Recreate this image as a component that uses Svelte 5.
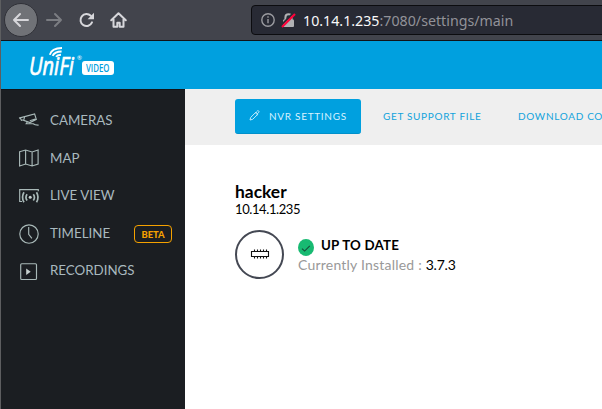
<script>
  const items = [
    { label: 'CAMERAS', icon: 'camera' },
    { label: 'MAP', icon: 'map' },
    { label: 'LIVE VIEW', icon: 'live' },
    { label: 'TIMELINE', icon: 'clock', beta: true },
    { label: 'RECORDINGS', icon: 'play' }
  ];
</script>

<div class="window">
  <div class="toolbar">
    <button class="back" aria-label="Back">
      <svg width="18" height="16" viewBox="0 0 18 16"><path d="M16 8H2M8 2L2 8l6 6" /></svg>
    </button>
    <svg class="forward" width="18" height="16" viewBox="0 0 18 16"><path d="M1 8h14M9 2l6 6-6 6" /></svg>
    <svg class="reload" width="16" height="16" viewBox="0 0 16 16"><path d="M11.8 3.8A6 6 0 1 0 13 10.4" /><path class="solid" d="M15 .8v6.4H8.6z" /></svg>
    <svg class="home" width="17" height="16" viewBox="0 0 17 16"><path d="M1.2 8.3L8.5 1.3l7.3 7M3.5 7v7.7h3.8v-4h2.4v4h3.8V7" /></svg>
    <div class="address">
      <svg class="info" width="14" height="14" viewBox="0 0 14 14"><circle cx="7" cy="7" r="6.2" /><path d="M7 6v4.3M7 3.2v1.6" /></svg>
      <svg class="lock" width="15" height="15" viewBox="0 0 15 15"><path class="shackle" d="M4.4 7V4.4a3.1 3.1 0 0 1 6.2 0V7" /><rect x="2" y="6.4" width="11" height="7.6" rx="1" /><path class="gap" d="M0 12.4L12.4 0" /><path class="slash" d="M1 14L14 1" /></svg>
      <span class="url"><b>10.14.1.235</b>:7080/settings/main</span>
    </div>
  </div>

  <header>
    <div class="logo">
      <span class="brand">UniFi</span>
      <svg class="waves" width="14" height="11" viewBox="0 0 14 11"><path d="M.8 7.8C2 3.3 6.5 1 13 1M3.6 8.8C5 5.9 8 4.6 12.6 4.5M7 9.8C8 8.4 9.6 7.9 12 7.8" /></svg>
      <span class="reg">®</span>
      <span class="video"><span>VIDEO</span></span>
    </div>
  </header>

  <div class="body">
    <nav>
      {#each items as item}
        <div class="item">
          <svg width="20" height="20" viewBox="0 0 20 20">
            {#if item.icon === 'camera'}
              <path d="M0 7.1L15.6 2.9l1.7 5.5-6.4 3.2-6.2-2.3.9-3.5M1.3 7.1l1.1 2.2 2.3-.5M10.8 9.8l5.5-1.8M8.4 10.6l-1.2 2.1 7 .1c1.2 1 2.8 1.4 5.4 1.3" />
            {:else if item.icon === 'map'}
              <path d="M.6 3.7L6.6 2l6.5 2 6-2v14l-6 2-6.5-2-6 2zM6.6 2v14M13.1 4v14" />
            {:else if item.icon === 'live'}
              <path d="M3 15.5H.7V3.6h18.6v1.6" />
              <path class="wave" d="M5 6.2c-1.8 3-1.8 7 0 10M17.5 6.2c1.8 3 1.8 7 0 10M8.1 8.2c-1.3 1.8-1.3 4.5 0 6.3M14.3 8.2c1.3 1.8 1.3 4.5 0 6.3" />
              <circle class="dot" cx="11.2" cy="11.3" r="1.5" />
            {:else if item.icon === 'clock'}
              <circle cx="10" cy="10" r="9.2" /><path d="M9.7 3v7.3l3.2 4" />
            {:else}
              <rect x="1.7" y="2.7" width="15.8" height="15.8" rx="1" /><path class="dot" d="M7.2 7.5v6.4l4.5-3.2z" />
            {/if}
          </svg>
          <span class="label">{item.label}</span>
          {#if item.beta}<span class="beta">BETA</span>{/if}
        </div>
      {/each}
    </nav>

    <main>
      <div class="tabs">
        <button class="active">
          <svg width="11" height="11" viewBox="0 0 11 11"><path d="M1 10l.7-2.6L7 2.1l2 2-5.3 5.2zM6 2.4L8.7 5M7.5 1.7l1-.9c.8-.6 2 .6 1.4 1.5l-1 .9" /></svg>
          <span>NVR SETTINGS</span>
        </button>
        <span class="tab">GET SUPPORT FILE</span>
        <span class="tab second">DOWNLOAD CO</span>
      </div>
      <section>
        <h1>hacker</h1>
        <div class="ip">10.14.1.235</div>
        <div class="firmware">
          <div class="chip">
            <svg width="20" height="12" viewBox="0 0 20 12"><path d="M1.5 3.5h17v5h-17zM4.5 1.5v2M7.5 1.5v2M10.5 1.5v2M13.5 1.5v2M16.5 1.5v2M4.5 8.5v2M7.5 8.5v2M10.5 8.5v2M13.5 8.5v2M16.5 8.5v2" /></svg>
          </div>
          <div class="status">
            <div class="state">
              <svg width="16" height="17" viewBox="0 0 16 17"><ellipse cx="8" cy="8.5" rx="8" ry="8.5" /><path d="M4 9.7l2.6 2.4 5.2-5.2" /></svg>
              <strong>UP TO DATE</strong>
            </div>
            <div class="installed">Currently Installed : <b>3.7.3</b></div>
          </div>
        </div>
      </section>
    </main>
  </div>
</div>

<style>
  .window {
    box-sizing: border-box;
    width: 602px;
    height: 409px;
    overflow: hidden;
    border-left: 1px solid #5d5e60;
    background: #fff;
    font-family: Lato, sans-serif;
    color: #000;
    white-space: nowrap;
  }
  svg { display: block; flex: none; fill: none; overflow: visible; }
  button { border: 0; padding: 0; font-family: inherit; }
  .toolbar {
    box-sizing: border-box;
    display: flex;
    align-items: center;
    height: 41px;
    background: #42444c;
    border-bottom: 1px solid #111318;
  }
  .toolbar > svg, .back svg { stroke: #d7d7db; stroke-width: 2; stroke-linecap: round; stroke-linejoin: round; }
  .back {
    box-sizing: border-box;
    flex: none;
    width: 34px;
    height: 34px;
    margin-left: 3px;
    padding-left: 7px;
    border: 1px solid #303138;
    border-radius: 50%;
    background: #707277;
  }
  .toolbar .forward { margin-left: 8px; stroke: #7b7d82; }
  .reload { margin-left: 15px; }
  .toolbar .solid { fill: #d7d7db; stroke: none; }
  .home { margin-left: 15px; }
  .address {
    box-sizing: border-box;
    display: flex;
    align-items: center;
    width: 380px;
    flex: none;
    height: 30px;
    margin-left: 124px;
    padding-left: 9px;
    border: 1px solid #0c0c0f;
    border-radius: 4px;
    background: #282a34;
  }
  .info { stroke: #9b9ba0; stroke-width: 1.4; }
  .lock { margin-left: 6px; stroke-width: 2; }
  .lock rect { fill: #b1b1b3; }
  .shackle { stroke: #b1b1b3; }
  .gap { stroke: #282a34; }
  .slash { stroke: #ff0039; stroke-width: 2.2; }
  .url {
    margin-left: 7px;
    font: 14.23px 'Noto Sans', sans-serif;
    color: #929299;
  }
  .url b { font-weight: 400; color: #f9f9fa; }
  header {
    box-sizing: border-box;
    height: 48px;
    background: #00a0df;
    padding: 6px 0 0 28px;
  }
  .logo { position: relative; width: 85px; height: 29px; color: #fff; }
  .brand {
    position: absolute;
    left: 0;
    top: 4px;
    font: italic 25px/28px 'Open Sans', sans-serif;
    -webkit-text-stroke: .7px #fff;
    transform: scaleX(.8);
    transform-origin: 0 50%;
  }
  .waves { position: absolute; left: 20px; top: 0; stroke: #fff; stroke-width: 1.9; }
  .reg { position: absolute; left: 48px; top: 7px; font: 6px/8px Lato, sans-serif; }
  .video {
    position: absolute;
    left: 53px;
    top: 14px;
    width: 32px;
    height: 14px;
    border-radius: 3px;
    background: #fff;
    color: #00a0df;
  }
  .video span {
    position: absolute;
    left: 4px;
    top: 0;
    font: 600 11.5px/14px 'Open Sans', sans-serif;
    transform: scaleX(.68);
    transform-origin: 0 50%;
  }
  .body { display: flex; height: 320px; }
  nav {
    box-sizing: border-box;
    width: 184px;
    flex: none;
    padding-top: 12px;
    background: #1b1e22;
    border-top: 1px solid #121418;
  }
  .item { display: flex; align-items: center; height: 37.6px; padding-left: 18px; color: #a9b9bf; }
  .item svg { stroke: #a9b9b8; stroke-width: 1.15; }
  .item .wave { stroke-width: 1.7; }
  .item .dot { fill: #c5cfcd; stroke: none; }
  .label { margin: -1.6px 0 0 11px; font-size: 13.33px; line-height: 18px; }
  .beta {
    box-sizing: border-box;
    width: 38px;
    height: 18px;
    margin: 1px 13px 0 auto;
    border: 1px solid #f5a100;
    border-radius: 4px;
    font-size: 9.4px;
    font-weight: 900;
    line-height: 17px;
    text-align: center;
    color: #f5a100;
  }
  main { width: 417px; overflow: hidden; }
  .tabs {
    box-sizing: border-box;
    display: flex;
    align-items: center;
    height: 56px;
    padding: 0 0 2px 50px;
    background: #efefef;
    color: #12a3dc;
    font-size: 10px;
    letter-spacing: .68px;
  }
  .active {
    box-sizing: border-box;
    display: flex;
    align-items: center;
    flex: none;
    width: 126px;
    height: 35px;
    padding-left: 14px;
    border-radius: 3px;
    border-bottom: 1px solid #0090ca;
    background: #00a0df;
    color: #d7f2ff;
    font-size: 10px;
    letter-spacing: .7px;
  }
  .active svg { stroke: #bdeafc; stroke-width: 1; }
  .active span { margin-left: 9px; }
  .tab { margin-left: 22px; }
  .second { margin-left: 36.5px; }
  section { padding: 36px 0 0 50px; }
  h1 { margin: 0; font-size: 17.4px; line-height: 22px; font-weight: 700; }
  .ip { font-size: 13px; line-height: 13px; height: 14px; letter-spacing: -.4px; }
  .firmware { display: flex; margin-top: 13px; }
  .chip {
    box-sizing: border-box;
    display: grid;
    place-items: center;
    width: 49px;
    height: 49px;
    border: 2px solid #444853;
    border-radius: 50%;
  }
  .chip svg { stroke: #111; stroke-width: 1.1; margin-top: -1px; }
  .status { margin: 5px 0 0 14px; }
  .state { display: flex; align-items: center; height: 20px; font-size: 13.33px; }
  .state svg { margin-top: 4px; }
  .state strong { margin-left: 7px; letter-spacing: .2px; }
  .state ellipse { fill: #18ba72; }
  .state path { stroke: #164c38; stroke-width: 1.1; }
  .installed { font-size: 14px; line-height: 20px; letter-spacing: .21px; color: #999; }
  .installed b { font-weight: 400; letter-spacing: -.2px; color: #000; }
</style>
